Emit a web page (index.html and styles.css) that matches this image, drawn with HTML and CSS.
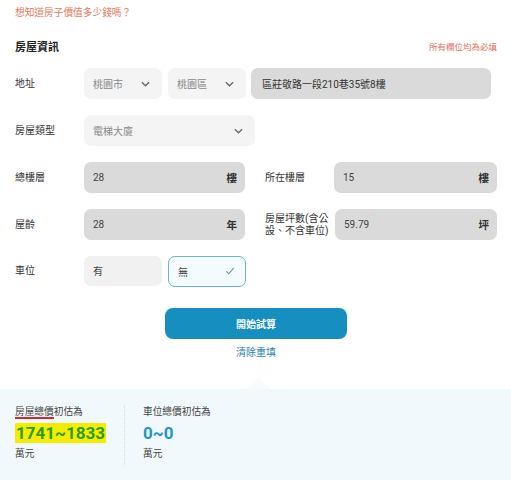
FILE: index.html
```
<!DOCTYPE html>
<html lang="zh-Hant">
<head>
<meta charset="utf-8">
<link rel="stylesheet" href="styles.css">
</head>
<body>
<div class="page">
  <div class="form">
    <p class="intro">想知道房子價值多少錢嗎？</p>
    <div class="head">
      <h2 class="title">房屋資訊</h2>
      <span class="note">所有欄位均為必填</span>
    </div>

    <div class="row">
      <label class="lab">地址</label>
      <div class="fields">
        <div class="select w78"><span class="ph">桃園市</span><svg class="chev" viewBox="0 0 10 6"><path d="M1 1l4 4 4-4"/></svg></div>
        <div class="select w78"><span class="ph">桃園區</span><svg class="chev" viewBox="0 0 10 6"><path d="M1 1l4 4 4-4"/></svg></div>
        <div class="input addr"><span class="val">區莊敬路一段210巷35號8樓</span></div>
      </div>
    </div>

    <div class="row">
      <label class="lab">房屋類型</label>
      <div class="fields">
        <div class="select w171"><span class="ph">電梯大廈</span><svg class="chev" viewBox="0 0 10 6"><path d="M1 1l4 4 4-4"/></svg></div>
      </div>
    </div>

    <div class="row two">
      <div class="half">
        <label class="lab">總樓層</label>
        <div class="input grow"><span class="val">28</span><span class="unit">樓</span></div>
      </div>
      <div class="half">
        <label class="lab">所在樓層</label>
        <div class="input grow"><span class="val">15</span><span class="unit">樓</span></div>
      </div>
    </div>

    <div class="row two">
      <div class="half">
        <label class="lab">屋齡</label>
        <div class="input grow"><span class="val">28</span><span class="unit">年</span></div>
      </div>
      <div class="half">
        <label class="lab small">房屋坪數(含公<br>設、不含車位)</label>
        <div class="input grow"><span class="val">59.79</span><span class="unit">坪</span></div>
      </div>
    </div>

    <div class="row park">
      <label class="lab">車位</label>
      <div class="fields">
        <div class="opt w78"><span class="val">有</span></div>
        <div class="opt w78 on"><span class="val">無</span><svg class="check" viewBox="0 0 12 10"><path d="M1.5 5.5l3 3 6-7"/></svg></div>
      </div>
    </div>

    <div class="actions">
      <button class="btn">開始試算</button>
      <a class="reset">清除重填</a>
    </div>
  </div>

  <div class="result">
    <div class="col">
      <p class="rlab"><span class="mark">房屋總價</span>初估為</p>
      <p class="num green"><span class="hl">1741~1833</span></p>
      <p class="unitt">萬元</p>
    </div>
    <div class="divider"></div>
    <div class="col">
      <p class="rlab">車位總價初估為</p>
      <p class="num blue">0~0</p>
      <p class="unitt">萬元</p>
    </div>
  </div>
</div>
</body>
</html>
```

FILE: styles.css
```
* { box-sizing: border-box; }
html, body { margin: 0; padding: 0; background: #fff; }
body {
  font-family: Roboto, "Noto Sans CJK TC", "Noto Sans", sans-serif;
  color: #333;
  width: 511px;
  height: 480px;
  overflow: hidden;
}
p { margin: 0; }
.page { display: flex; flex-direction: column; height: 480px; }
.form { padding: 6px 14px 0 15px; flex: 1; }
.intro { font-size: 9.7px; color: #e57a5c; line-height: 14px; }
.head {
  display: flex; justify-content: space-between; align-items: center;
  margin-top: 18px; height: 16px;
}
.title { margin: 0; font-size: 11px; font-weight: 700; color: #222; }
.note { font-size: 8.5px; color: #e36c5c; }

.row { display: flex; align-items: center; height: 31px; margin-top: 16px; }
.head + .row { margin-top: 14px; }
.row.park { margin-top: 15px; }
.lab { width: 69px; flex: none; font-size: 10px; color: #333; line-height: 12px; }
.lab.small { width: 70px; }
.fields { display: flex; gap: 6px; flex: 1; height: 31px; }

.select, .input, .opt {
  height: 31px; border-radius: 7px; display: flex; align-items: center;
  padding: 0 10px 0 9px; font-size: 10px;
}
.select { background: #f4f4f4; justify-content: space-between; }
.w78 { width: 78px; }
.w171 { width: 171px; }
.ph { color: #8a8a8a; }
.chev { width: 9px; height: 6px; fill: none; stroke: #666; stroke-width: 1.4; margin-right: 2px; }
.input { background: #dadada; justify-content: space-between; }
.addr { width: 240px; margin-left: -1px; padding-left: 11px; }
.val { color: #444; }
.addr .val { color: #333; }
.grow { flex: 1; }
.unit { font-weight: 700; color: #333; font-size: 10.5px; margin-right: -2px; }

.two { gap: 20px; }
.half { display: flex; align-items: center; width: 230px; }
.two .half:last-child { width: 232px; }

.park .fields { height: 30px; }
.opt { height: 30px; background: #f1f1f1; justify-content: space-between; }
.opt.on { background: #f3fbfd; border: 1px solid #6cb4c2; height: 31px; }
.check { width: 10px; height: 8px; fill: none; stroke: #4f9eaf; stroke-width: 1.4; }

.actions { display: flex; flex-direction: column; align-items: center; margin-top: 22px; }
.btn {
  width: 182px; height: 31px; border: none; border-radius: 8px;
  background: #168fc0; color: #fff; font-weight: 700; font-size: 10px;
  font-family: inherit;
}
.reset { margin-top: 7px; font-size: 10px; color: #2a86b4; line-height: 14px; }

.result {
  position: relative;
  background: #f2f9fc; height: 91px; display: flex; align-items: flex-start;
  padding: 16px 15px 0 15px;
}
.result::before {
  content: ""; position: absolute; left: 246px; top: -12px;
  border-left: 12px solid transparent; border-right: 12px solid transparent;
  border-bottom: 12px solid #f6fbfd;
}
.col { display: flex; flex-direction: column; }
.col:first-child { width: 109px; }
.rlab { font-size: 9.7px; color: #444; line-height: 14px; }
.mark { border-bottom: 2px solid #d8262a; padding-bottom: 0; }
.num { font-size: 17px; font-weight: 700; line-height: 23px; margin-top: 3px; }
.green { color: #2e9b1c; }
.hl { background: #f3ee00; padding: 0 1px; }
.blue { color: #1d95c6; }
.unitt { font-size: 9.7px; color: #444; line-height: 14px; margin-top: 2px; }
.divider { width: 0; height: 61px; border-left: 1px dotted #d6dde0; margin: 0 18px 0 0; }
```
